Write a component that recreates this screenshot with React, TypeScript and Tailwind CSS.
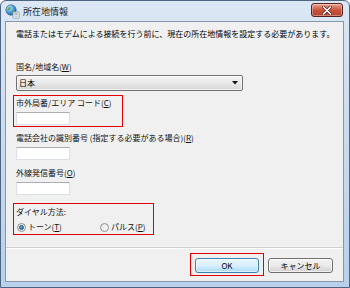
const jp = "font-['Noto_Sans_CJK_JP','Noto_Sans',sans-serif]";

function TitleIcon() {
  return (
    <svg width="15" height="15" viewBox="0 0 15 15" className="shrink-0">
      <defs>
        <radialGradient id="globe" cx="0.35" cy="0.3" r="0.8">
          <stop offset="0" stopColor="#bfe6ff" />
          <stop offset="0.6" stopColor="#3c8fd6" />
          <stop offset="1" stopColor="#1d5d9e" />
        </radialGradient>
      </defs>
      <circle cx="6" cy="6" r="5.2" fill="url(#globe)" stroke="#2a5d8c" strokeWidth="0.6" />
      <path d="M3 3.5 Q5 2.5 6 4 Q5 6 3.5 6.5 Q2.2 5.5 3 3.5Z" fill="#5fb04a" />
      <path d="M7.5 6.5 Q9.5 6 10 8 Q8.5 10 7.2 9.3Z" fill="#5fb04a" />
      <rect x="8" y="8" width="6.2" height="6.2" rx="0.8" fill="#f7f7f7" stroke="#7b8794" strokeWidth="0.7" />
      <rect x="9.3" y="9.4" width="3.6" height="1.2" fill="#8aa0b6" />
      <rect x="9.3" y="11.5" width="3.6" height="1.2" fill="#b7c4d2" />
    </svg>
  );
}

function CloseButton() {
  return (
    <div className="mt-[2px] mr-[6px] w-[32px] h-[14px] rounded-[3px] border border-[#5a2323] bg-gradient-to-b from-[#e8a491] via-[#c9533d] to-[#b7432e] flex items-center justify-center shadow-[inset_0_0_0_1px_rgba(255,255,255,0.35)]">
      <svg width="10" height="9" viewBox="0 0 10 9">
        <path d="M1.5 1 L8.5 8 M8.5 1 L1.5 8" stroke="#5a2323" strokeWidth="3" strokeLinecap="round" />
        <path d="M1.5 1 L8.5 8 M8.5 1 L1.5 8" stroke="#ffffff" strokeWidth="1.6" strokeLinecap="round" />
      </svg>
    </div>
  );
}

function TextBox() {
  return (
    <div className="w-[54px] h-[13px] bg-white border border-[#dbdfe6] border-t-[#abadb3]" />
  );
}

function Radio({ checked }: { checked?: boolean }) {
  return (
    <span className="w-[9px] h-[9px] rounded-full border border-[#8e8f8f] bg-gradient-to-br from-[#e6e6e6] to-[#fafafa] flex items-center justify-center shrink-0">
      {checked && (
        <span className="w-[5px] h-[5px] rounded-full bg-gradient-to-br from-[#7fd0f7] to-[#0e5f9a] border border-[#1d4f73]" />
      )}
    </span>
  );
}

function Label({ children }: { children: React.ReactNode }) {
  return <div className="text-[8px] leading-[10px] text-[#111] whitespace-nowrap">{children}</div>;
}

function U({ children }: { children: React.ReactNode }) {
  return <span className="underline underline-offset-1">{children}</span>;
}

export default function App() {
  return (
    <div className={`w-[350px] h-[288px] ${jp} bg-white`}>
      <div className="w-[350px] h-[288px] rounded-t-[6px] border border-[#4d6580] bg-gradient-to-b from-[#dbe7f4] via-[#c9dbef] to-[#b8d0ea] flex flex-col">
        <header className="h-[20px] shrink-0 flex items-start justify-between">
          <div className="flex items-center gap-[3px] pl-[4px] pt-[3px]">
            <TitleIcon />
            <span className="text-[9px] leading-[12px] text-[#1b1b1b]">所在地情報</span>
          </div>
          <CloseButton />
        </header>

        <div className="ml-[4px] mr-[5px] h-[261px] shrink-0 border border-[#8596ad] bg-[#f0f0f0] flex flex-col">
          <div className="pl-[10px] pt-[7px] flex flex-col items-start">
            <div className="text-[8px] leading-[10px] text-black whitespace-nowrap">
              電話またはモデムによる接続を行う前に、現在の所在地情報を設定する必要があります。
            </div>

            <div className="mt-[23px]">
              <Label>
                国名/地域名(<U>W</U>)
              </Label>
            </div>
            <div className="mt-[3px] w-[227px] h-[16px] rounded-[2px] border border-[#707070] bg-gradient-to-b from-[#f3f3f3] via-[#e9e9e9] to-[#d6d6d6] flex items-center justify-between pl-[2px] pr-[4px] shadow-[inset_0_0_0_1px_rgba(255,255,255,0.7)]">
              <span className="text-[8px] leading-[10px] text-black">日本</span>
              <svg width="6" height="4" viewBox="0 0 6 4">
                <path d="M0 0 H6 L3 3.5 Z" fill="#111" />
              </svg>
            </div>

            <div className="mt-[4px] ml-[-3px] w-[110px] h-[32px] border border-[#e00000] pl-[2px] pt-[2px]">
              <Label>
                市外局番/エリア コード(<U>C</U>)
              </Label>
              <div className="mt-[4px]">
                <TextBox />
              </div>
            </div>

            <div className="mt-[6px]">
              <Label>
                電話会社の識別番号 (指定する必要がある場合)(<U>R</U>)
              </Label>
            </div>
            <div className="mt-[4px]">
              <TextBox />
            </div>

            <div className="mt-[8px]">
              <Label>
                外線発信番号(<U>O</U>)
              </Label>
            </div>
            <div className="mt-[4px]">
              <TextBox />
            </div>

            <div className="mt-[8px] ml-[-3px] w-[141px] h-[32px] border border-[#e00000] pl-[2px] pt-[3px]">
              <Label>ダイヤル方法:</Label>
              <div className="mt-[5px] flex items-center h-[10px]">
                <div className="w-[84px] flex items-center gap-[2px] pl-[1px]">
                  <Radio checked />
                  <Label>
                    トーン(<U>T</U>)
                  </Label>
                </div>
                <div className="flex items-center gap-[2px]">
                  <Radio />
                  <Label>
                    パルス(<U>P</U>)
                  </Label>
                </div>
              </div>
            </div>
          </div>

          <div className="mt-[12px] h-[2px] shrink-0 border-t border-[#d0d0d0] bg-white" />

          <div className="mt-[4px] flex justify-end items-start pr-[10px]">
            <div className="h-[23px] border border-[#e00000] px-[4px] pt-[4px] flex items-start">
              <button
                type="button"
                className="block w-[64px] h-[15px] rounded-[3px] border border-[#3c7fb1] bg-gradient-to-b from-[#eaf6fd] via-[#d9f0fc] to-[#a7d9f5] text-[8px] leading-[10px] text-black shadow-[inset_0_0_0_1px_rgba(255,255,255,0.6)]"
              >
                OK
              </button>
            </div>
            <button
              type="button"
              className="block ml-[4px] mt-[5px] w-[65px] h-[15px] rounded-[3px] border border-[#707070] bg-gradient-to-b from-[#f2f2f2] via-[#ebebeb] to-[#cfcfcf] text-[8px] leading-[10px] text-black shadow-[inset_0_0_0_1px_rgba(255,255,255,0.7)]"
            >
              キャンセル
            </button>
          </div>
        </div>
      </div>
    </div>
  );
}
